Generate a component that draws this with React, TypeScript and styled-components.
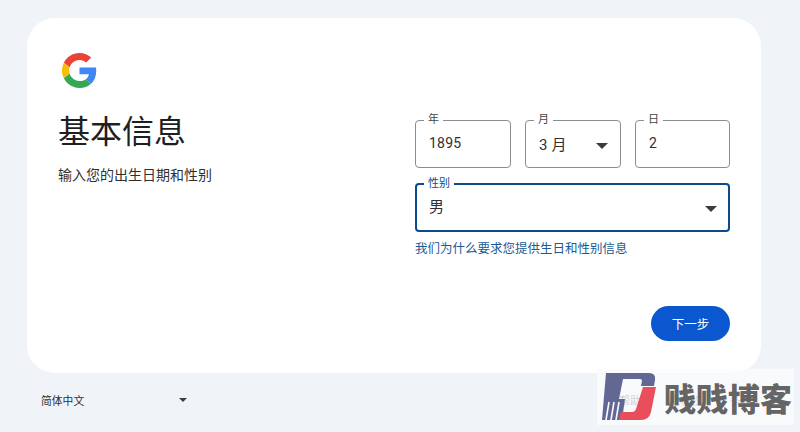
import styled, { createGlobalStyle } from "styled-components";

const GlobalStyle = createGlobalStyle`
    html, body {
        margin: 0;
        padding: 0;
        background-color: #f0f4f9;
    }
    * {
        box-sizing: border-box;
    }
    body {
        font-family: "Roboto", "Noto Sans CJK SC", sans-serif;
        color: #1f1f1f;
    }
`
const Pagina = styled.div`
    width: 800px;
    height: 432px;
    padding: 18px 39px 0 27px;
    position: relative;
    overflow: hidden;
`
const Cartao = styled.main`
    height: 355px;
    background-color: #fff;
    border-radius: 28px;
    padding: 31px 31px 32px;
    display: grid;
    grid-template-columns: 357px 315px;
`
const Esquerda = styled.section`
    display: flex;
    flex-direction: column;
    align-items: flex-start;
`
const Titulo = styled.h1`
    font-size: 32px;
    font-weight: 400;
    line-height: 40px;
    margin: 24px 0 0;
    color: #1f1f1f;
`
const Subtitulo = styled.p`
    font-size: 14px;
    line-height: 20px;
    margin: 13px 0 0;
    color: #303030;
`
const Direita = styled.section`
    display: flex;
    flex-direction: column;
    padding-top: 64px;
`
const LinhaData = styled.div`
    display: grid;
    grid-template-columns: 96px 96px 95px;
    gap: 14px;
`
const Campo = styled.fieldset<{ $ativo?: boolean }>`
    margin: 0;
    min-width: 0;
    height: 55px;
    padding: ${p => (p.$ativo ? "0 11px 0 12px" : "0 12px 0 13px")};
    border: ${p => (p.$ativo ? "2px solid #0b4a8c" : "1px solid #8a8d91")};
    border-radius: 4px;
    display: flex;
    align-items: center;
    justify-content: space-between;
    font-size: 14px;
    color: #303030;
`
const Rotulo = styled.legend<{ $ativo?: boolean }>`
    font-size: 11px;
    line-height: 14px;
    padding: 0 4px;
    margin-left: -5px;
    color: ${p => (p.$ativo ? "#0b4a8c" : "#444746")};
`
const Valor = styled.span`
    display: block;
    margin-top: -9px;
    letter-spacing: 0.2px;
`
const ValorMes = styled(Valor)`
    font-size: 15px;
    margin-top: -7px;
`
const ValorGenero = styled(Valor)`
    font-size: 15px;
    margin-top: -11px;
`
const Seta = styled.span<{ $pequena?: boolean }>`
    display: block;
    width: 0;
    height: 0;
    margin-top: ${p => (p.$pequena ? "0" : "-3px")};
    border-left: ${p => (p.$pequena ? "4px" : "6px")} solid transparent;
    border-right: ${p => (p.$pequena ? "4px" : "6px")} solid transparent;
    border-top: ${p => (p.$pequena ? "4px" : "6px")} solid #3c3c3c;
`
const CampoGenero = styled.div`
    margin-top: 9px;
`
const Ajuda = styled.a`
    display: block;
    margin-top: 9px;
    font-size: 12.5px;
    line-height: 16px;
    color: #1d5a94;
    text-decoration: none;
`
const Acoes = styled.div`
    margin-top: auto;
    display: flex;
    justify-content: flex-end;
`
const Botao = styled.button`
    width: 79px;
    height: 35px;
    border: 0;
    border-radius: 18px;
    background-color: #0b57d0;
    color: #fff;
    font-family: inherit;
    font-size: 12.5px;
`
const Rodape = styled.footer`
    display: flex;
    align-items: center;
    height: 20px;
    margin-top: 17px;
    padding-left: 14px;
    font-size: 10.8px;
    color: #303030;
`
const Idioma = styled.div`
    width: 146px;
    display: flex;
    align-items: center;
    justify-content: space-between;
`
const LinksRodape = styled.nav`
    margin-left: auto;
    margin-right: 9px;
    display: flex;
    gap: 28px;
    font-size: 11px;
`
const MarcaDagua = styled.div`
    position: absolute;
    left: 597px;
    top: 369px;
    width: 197px;
    height: 56px;
    background-color: rgba(250, 251, 253, 0.8);
    display: flex;
    align-items: center;
    gap: 7px;
    padding-left: 2px;
`
const MarcaLogo = styled.svg`
    opacity: 0.92;
`
const MarcaTexto = styled.span`
    font-family: "Noto Sans CJK SC", sans-serif;
    font-size: 32px;
    font-weight: 900;
    line-height: 1;
    color: rgba(80, 80, 80, 0.9);
    white-space: nowrap;
`

function LogoGoogle() {
    return (
        <svg width="35" height="35" viewBox="0 0 48 48" style={{ marginLeft: 4, marginTop: 4, display: "block" }}>
            <path fill="#EA4335" d="M24 9.5c3.54 0 6.71 1.22 9.21 3.6l6.85-6.85C35.9 2.38 30.47 0 24 0 14.62 0 6.51 5.38 2.56 13.22l7.98 6.19C12.43 13.72 17.74 9.5 24 9.5z" />
            <path fill="#4285F4" d="M46.98 24.55c0-1.57-.15-3.09-.38-4.55H24v9.02h12.94c-.58 2.96-2.26 5.48-4.78 7.18l7.73 6c4.51-4.18 7.09-10.36 7.09-17.65z" />
            <path fill="#FBBC05" d="M10.53 28.59c-.48-1.45-.76-2.99-.76-4.59s.27-3.14.76-4.59l-7.98-6.19C.92 16.46 0 20.12 0 24c0 3.88.92 7.54 2.56 10.78l7.97-6.19z" />
            <path fill="#34A853" d="M24 48c6.48 0 11.93-2.13 15.89-5.81l-7.73-6c-2.15 1.45-4.92 2.3-8.16 2.3-6.26 0-11.57-4.22-13.47-9.91l-7.98 6.19C6.51 42.62 14.62 48 24 48z" />
        </svg>
    )
}

function LogoMarca() {
    return (
        <MarcaLogo width="58" height="50" viewBox="0 0 58 50">
            <path fill="#575b8c" d="M7 1H50Q57 1 56 8L55 14H42L43 9Q43 7 41 7H24L20 27L17 48H3Z" />
            <path fill="#575b8c" d="M19 27H26L23 48H17Z" />
            <path stroke="#fafbfd" strokeWidth="1.6" d="M10 30L7 48M15 30L12 48M20 30L17 48" />
            <path fill="#e8404f" d="M44 15H57L52 40Q50 48 42 48H20L22 40H33Q36 40 37 37Z" />
        </MarcaLogo>
    )
}

export default function App() {
    return (
        <Pagina>
            <GlobalStyle />
            <Cartao>
                <Esquerda>
                    <LogoGoogle />
                    <Titulo>基本信息</Titulo>
                    <Subtitulo>输入您的出生日期和性别</Subtitulo>
                </Esquerda>
                <Direita>
                    <LinhaData>
                        <Campo>
                            <Rotulo>年</Rotulo>
                            <Valor>1895</Valor>
                        </Campo>
                        <Campo>
                            <Rotulo>月</Rotulo>
                            <ValorMes>3 月</ValorMes>
                            <Seta />
                        </Campo>
                        <Campo>
                            <Rotulo>日</Rotulo>
                            <Valor>2</Valor>
                        </Campo>
                    </LinhaData>
                    <CampoGenero>
                        <Campo $ativo>
                            <Rotulo $ativo>性别</Rotulo>
                            <ValorGenero>男</ValorGenero>
                            <Seta />
                        </Campo>
                    </CampoGenero>
                    <Ajuda href="#">我们为什么要求您提供生日和性别信息</Ajuda>
                    <Acoes>
                        <Botao>下一步</Botao>
                    </Acoes>
                </Direita>
            </Cartao>
            <Rodape>
                <Idioma>
                    简体中文
                    <Seta $pequena />
                </Idioma>
                <LinksRodape>
                    <span>帮助</span>
                    <span>隐私权</span>
                    <span>条款</span>
                </LinksRodape>
            </Rodape>
            <MarcaDagua>
                <LogoMarca />
                <MarcaTexto>贱贱博客</MarcaTexto>
            </MarcaDagua>
        </Pagina>
    )
}
